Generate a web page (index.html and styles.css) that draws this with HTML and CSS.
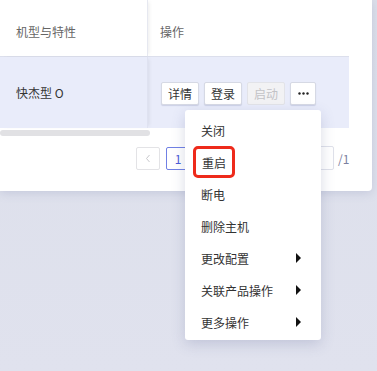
FILE: index.html
```html
<!DOCTYPE html>
<html lang="zh">
<head>
<meta charset="utf-8">
<link rel="stylesheet" href="styles.css">
</head>
<body>
<div class="page">
  <div class="card">
    <div class="table">
      <div class="thead">
        <div class="c1">机型与特性</div>
        <div class="c2">操作</div>
      </div>
      <div class="trow">
        <div class="c1">快杰型 O</div>
        <div class="c2 actions">
          <span class="btn">详情</span>
          <span class="btn">登录</span>
          <span class="btn disabled">启动</span>
          <span class="btn more"><svg width="11" height="3" viewBox="0 0 11 3"><circle cx="1.5" cy="1.5" r="1.2" fill="#222"/><circle cx="5.5" cy="1.5" r="1.2" fill="#222"/><circle cx="9.5" cy="1.5" r="1.2" fill="#222"/></svg></span>
        </div>
      </div>
    </div>
    <div class="scrollbar"><div class="thumb"></div></div>
    <div class="pager">
      <span class="pbtn prev"><svg width="6" height="9" viewBox="0 0 6 9"><path d="M4.5 1 L1.5 4.5 L4.5 8" fill="none" stroke="#c8c8cc" stroke-width="1"/></svg></span>
      <span class="pbtn active">1</span>
      <span class="pbtn"></span>
      <span class="pselect"></span>
      <span class="pinput"></span>
      <span class="ptotal">/1</span>
    </div>
  </div>
  <div class="menu">
    <div class="item">关闭</div>
    <div class="item"><span class="hl">重启</span></div>
    <div class="item">断电</div>
    <div class="item">删除主机</div>
    <div class="item sub">更改配置<span class="tri"></span></div>
    <div class="item sub">关联产品操作<span class="tri"></span></div>
    <div class="item sub">更多操作<span class="tri"></span></div>
  </div>
</div>
</body>
</html>
```

FILE: styles.css
```css
html, body {
  margin: 0;
  padding: 0;
}
body {
  background: #dde0eb;
  font-family: "Noto Sans CJK SC", "Noto Sans", sans-serif;
  font-size: 12px;
  color: #333;
  width: 377px;
  height: 371px;
  overflow: hidden;
}
.page {
  position: relative;
  width: 377px;
  height: 371px;
  background: linear-gradient(#dcdfea, #e0e2ee);
}
.card {
  width: 372px;
  height: 191px;
  background: #fff;
  border-bottom-right-radius: 4px;
  box-shadow: 0 2px 10px rgba(120, 128, 170, 0.25);
  display: flex;
  flex-direction: column;
}
.table {
  width: 349px;
}
.thead {
  display: flex;
  height: 57px;
  border-bottom: 1px solid #dcdfec;
  box-sizing: border-box;
  color: #666;
}
.thead .c1, .thead .c2 {
  display: flex;
  align-items: center;
  padding-top: 6px;
  box-sizing: border-box;
}
.c1 {
  width: 148px;
  padding-left: 16px;
  box-sizing: border-box;
  border-right: 1px solid #e6e8f0;
  box-shadow: 3px 0 4px -2px rgba(0, 0, 0, 0.08);
}
.c2 {
  flex: 1;
  padding-left: 12px;
  box-sizing: border-box;
}
.trow {
  display: flex;
  height: 71px;
  background: #e9ecfa;
}
.trow .c1 {
  display: flex;
  align-items: center;
  border-right-color: #dfe2f1;
}
.actions {
  display: flex;
  align-items: center;
  gap: 5px;
  padding-left: 13px;
  padding-top: 1px;
}
.btn {
  display: flex;
  align-items: center;
  justify-content: center;
  width: 38px;
  height: 23px;
  box-sizing: border-box;
  background: #fff;
  border: 1px solid #d6d9e4;
  border-radius: 2px;
  box-shadow: 0 1px 1px rgba(90, 100, 150, 0.2);
  color: #333;
}
.btn.disabled {
  background: #f2f2f4;
  color: #c2c2c6;
  box-shadow: none;
  border-color: #e2e3e8;
}
.btn.more {
  width: 26px;
}
.scrollbar {
  height: 9px;
  padding-top: 2px;
  box-sizing: border-box;
}
.thumb {
  width: 150px;
  height: 6px;
  border-radius: 3px;
  background: #e1e1e4;
}
.pager {
  display: flex;
  align-items: center;
  gap: 6px;
  padding-top: 9px;
  padding-left: 136px;
}
.pbtn {
  display: flex;
  align-items: center;
  justify-content: center;
  width: 24px;
  height: 23px;
  box-sizing: border-box;
  border: 1px solid #e3e3e6;
  border-radius: 2px;
  color: #bbb;
  font-size: 12px;
}
.pbtn.active {
  border-color: #7080e4;
  color: #4a5ad8;
}
.pselect {
  width: 62px;
  height: 24px;
  box-sizing: border-box;
  border: 1px solid #dfe1ea;
  border-radius: 2px;
}
.pinput {
  width: 40px;
  height: 24px;
  box-sizing: border-box;
  border: 1px solid #dfe1ea;
  border-radius: 2px;
}
.ptotal {
  color: #7b80a0;
  margin-left: -2px;
}
.menu {
  position: absolute;
  left: 185px;
  top: 110px;
  width: 136px;
  height: 230px;
  background: #fff;
  border-radius: 3px;
  box-shadow: 0 4px 14px rgba(80, 90, 140, 0.22);
  padding-top: 4px;
  box-sizing: border-box;
}
.item {
  height: 32px;
  display: flex;
  align-items: center;
  padding-left: 16px;
  color: #333;
}
.item.sub {
  justify-content: space-between;
  padding-right: 20px;
}
.hl {
  display: inline-flex;
  align-items: center;
  margin-left: -8px;
  padding: 0 6px;
  height: 32px;
  box-sizing: border-box;
  border: 3px solid #ee2a1b;
  border-radius: 5px;
}
.tri {
  width: 0;
  height: 0;
  border-top: 5px solid transparent;
  border-bottom: 5px solid transparent;
  border-left: 5px solid #111;
}
```
